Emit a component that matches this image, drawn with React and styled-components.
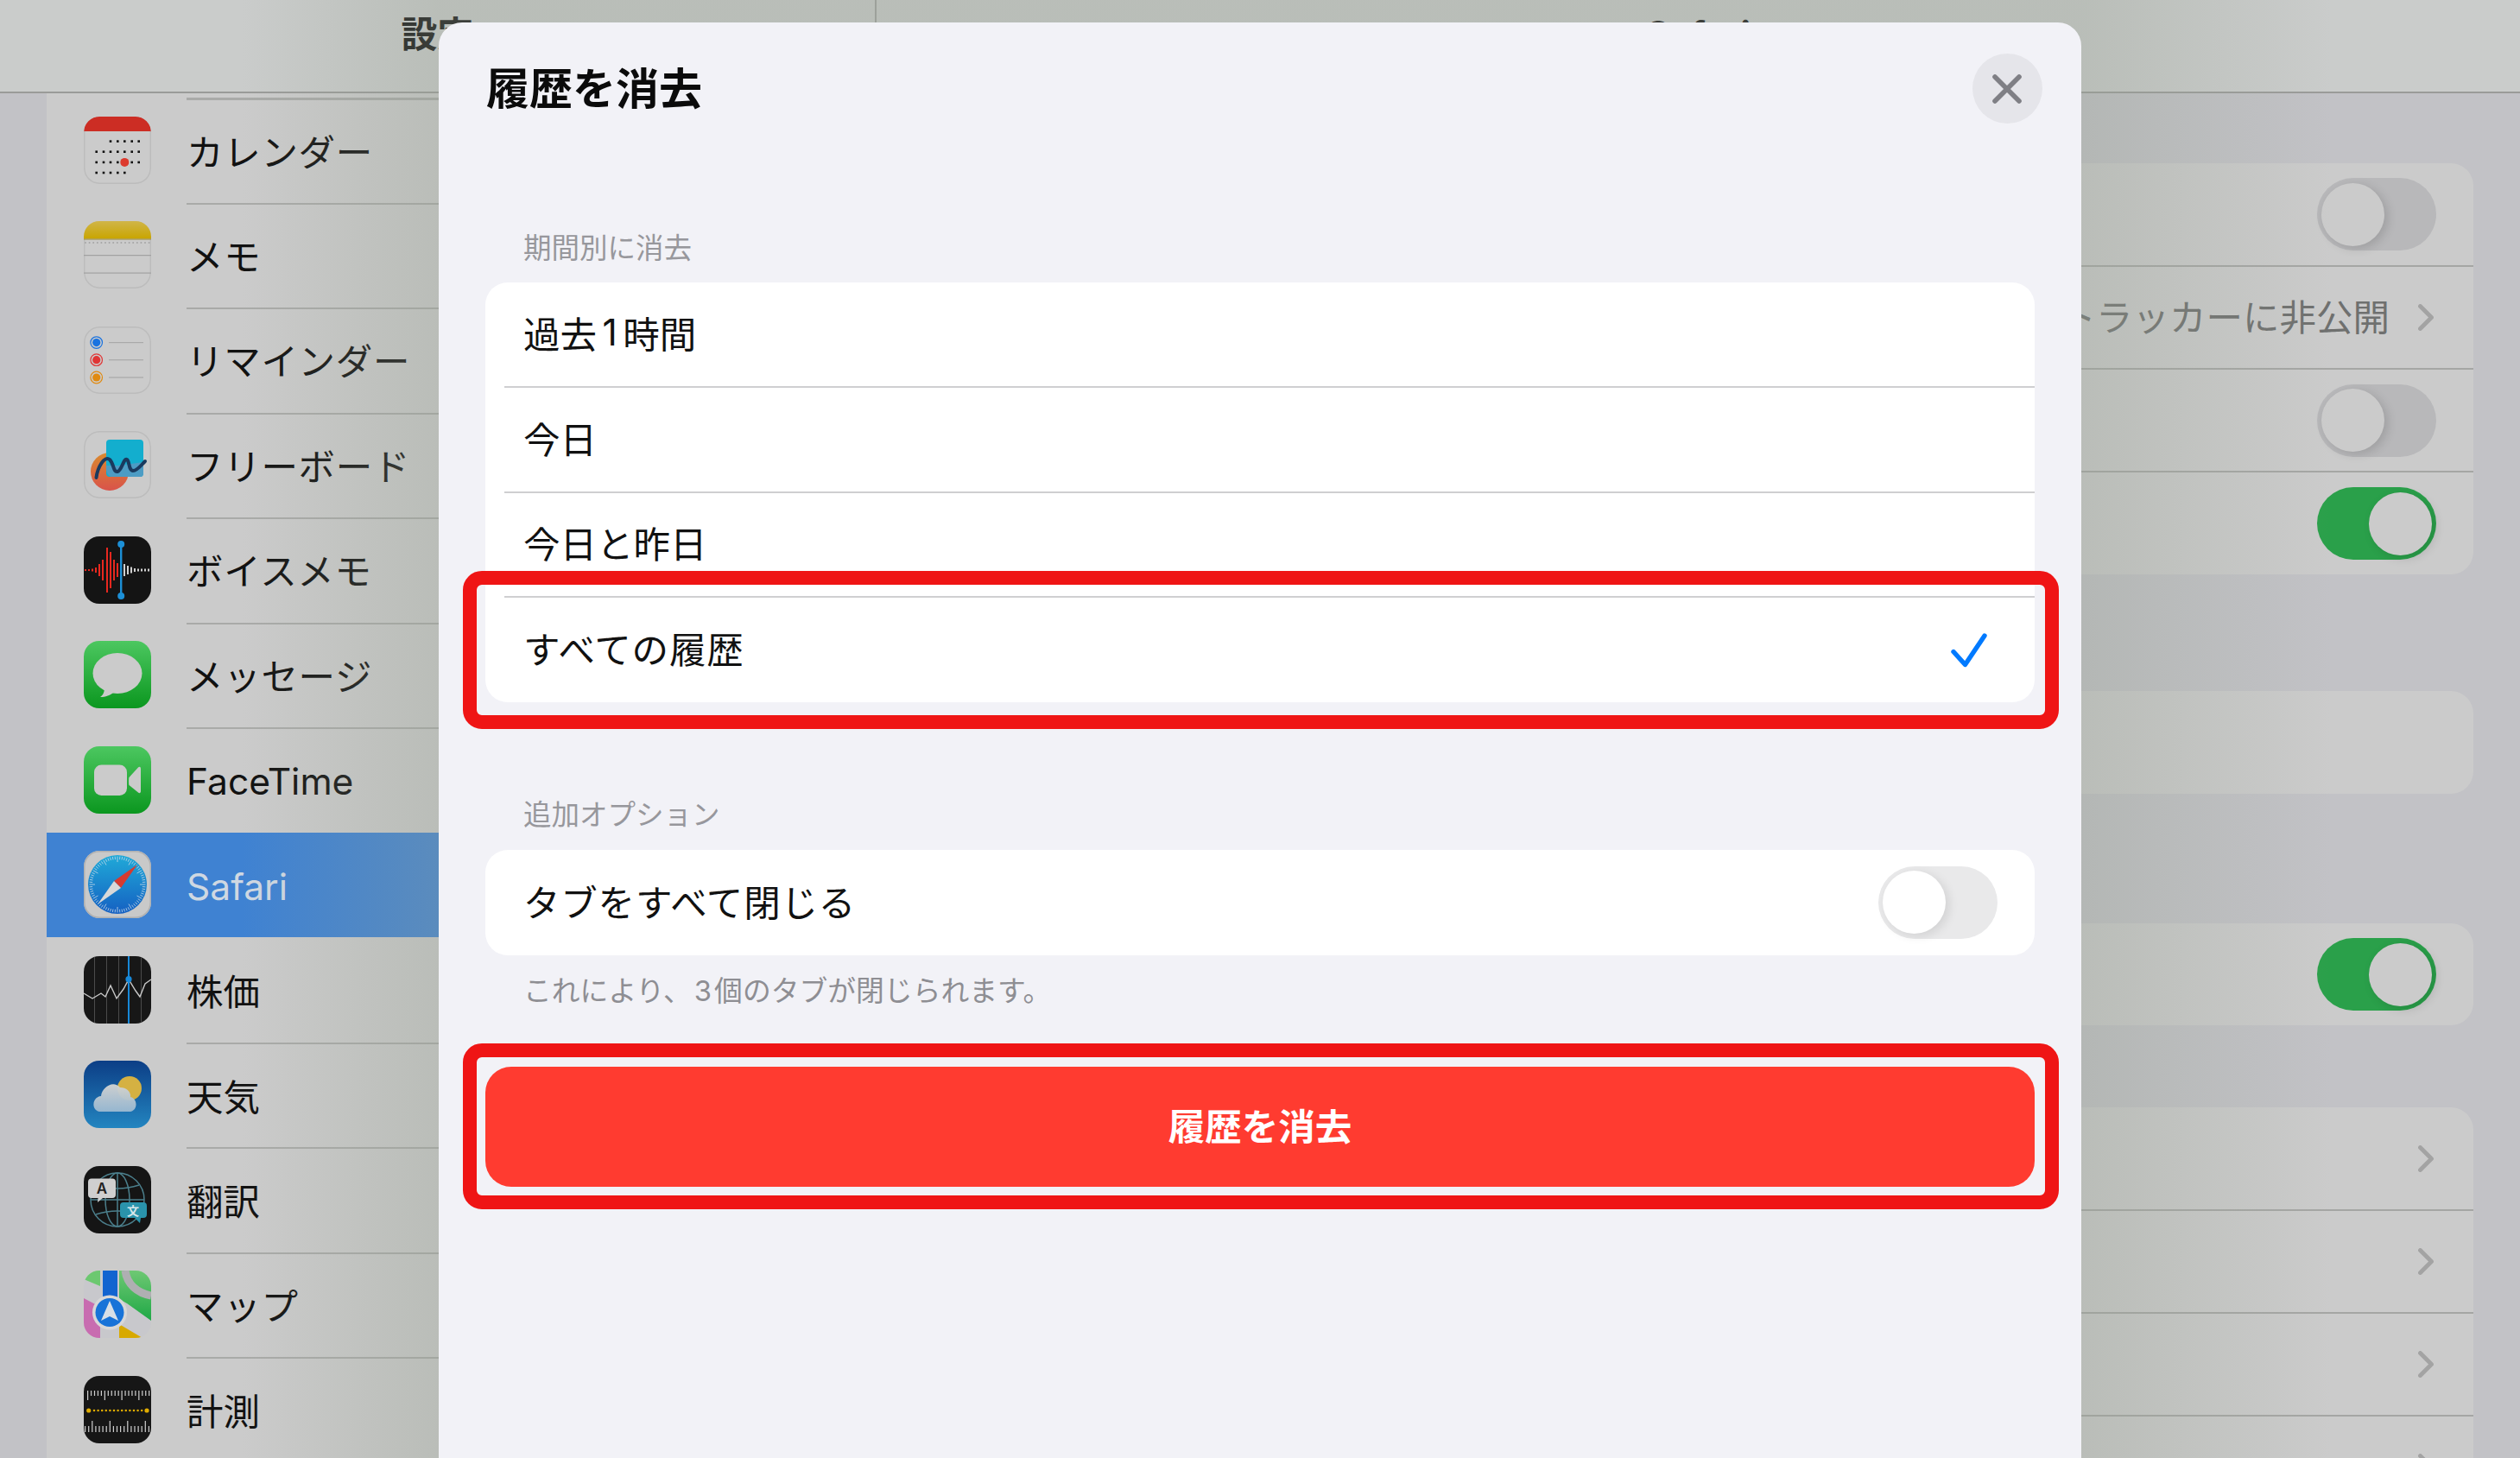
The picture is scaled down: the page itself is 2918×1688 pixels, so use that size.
import React from "react";
import styled, { createGlobalStyle } from "styled-components";

const FONT = `"Inter", "Noto Sans CJK JP", sans-serif`;

const Global = createGlobalStyle`
  html, body { margin: 0; padding: 0; background: #c2c2c6; }
  * { box-sizing: border-box; }
`;

const Page = styled.div`
  position: relative; width: 2918px; height: 1688px; overflow: hidden;
  font-family: ${FONT}; color: #111; background: #c2c2c6;
  display: flex; flex-direction: column;
`;
const TopBar = styled.header`
  flex: 0 0 108px; display: flex; background: #cacccb; border-bottom: 2px solid #9a9b99;
`;
const BarCell = styled.div`
  display: flex; justify-content: center; padding-top: 17px;
  font-size: 42px; line-height: 46px; font-weight: 700; color: #111;
  ${p => p.$left ? "flex: 0 0 1015px; border-right: 2px solid #a0a19f;" : "flex: 1;"}
`;
const Body = styled.div`flex: 1; display: flex; min-height: 0;`;
const Sidebar = styled.nav`flex: 0 0 1015px; padding-left: 54px; overflow: hidden;`;
const SideList = styled.div`background: #cbcbcb; height: 100%; padding-top: 5px;`;
const SideRow = styled.div`
  height: 121.5px; display: flex; align-items: center; padding-left: 43px;
  background: ${p => p.$active ? "#3f82d2" : "transparent"};
`;
const SideBody = styled.div`
  flex: 1; align-self: stretch; margin-left: 41px; display: flex; align-items: center;
  font-size: 42.5px;
  letter-spacing: ${p => p.$kind ? 0 : 0.7}px;
  padding: ${p => p.$kind === "latin" ? "2px 0 0" : p.$kind === "kanji" ? "0 0 2px" : "0 0 4px"};
  color: ${p => p.$active ? "#cfd8e2" : "#111"};
  border-top: ${p => p.$first ? 3 : 2}px solid ${p => p.$noLine ? "transparent" : "#a9aaa8"};
`;
const IconSvg = styled.svg`
  width: 78px; height: 78px; flex: 0 0 78px; border-radius: 18px; display: block;
`;

const Pane = styled.main`flex: 1; padding: 81px 54px 0 0; overflow: hidden; display: flex; flex-direction: column;`;
const PaneGroup = styled.section`
  flex: none; margin-top: ${p => p.$top || 0}px; background: #cbcbcb; border-radius: 26px;
`;
const PaneRow = styled.div`
  height: ${p => p.$h || 119}px; display: flex; align-items: center; justify-content: flex-end;
  padding-right: ${p => p.$chev ? 46 : 43}px; gap: 33px;
  white-space: nowrap;
  border-top: ${p => p.$first ? "none" : "2px solid #a5a6a4"};
`;
const PaneLabel = styled.span`font-size: 42.5px; color: #6f706f; padding-bottom: 6px;`;
const Chevron = styled.svg`width: 18px; height: 31px; flex: none; display: block;`;

const ToggleTrack = styled.div`
  position: relative; width: 138px; height: 84px; flex: none; border-radius: 42px;
  background: ${p => p.$on ? "#2aa04a" : p.$light ? "#e9e9ea" : "#b8b8ba"};
`;
const ToggleKnob = styled.div`
  position: absolute; top: 5.5px; left: ${p => p.$on ? 60 : 5}px; width: 73px; height: 73px; border-radius: 50%;
  background: ${p => p.$light ? "#fff" : "#cbcbcb"};
  box-shadow: 4px 3px 12px rgba(0,0,0,${p => p.$light ? 0.1 : 0.14});
`;

const Dim = styled.div`
  position: absolute; inset: 0; pointer-events: none;
  background: linear-gradient(90deg,
    rgba(150,160,145,0) 9.6%, rgba(150,160,145,.32) 17.4%,
    rgba(150,160,145,.32) 82.6%, rgba(150,160,145,0) 92.5%);
`;

const Sheet = styled.div`
  position: absolute; left: 508px; top: 26px; width: 1902px; height: 1700px;
  background: #f2f2f7; border-radius: 27px; padding: 36px 54px 0;
`;
const SheetHead = styled.div`display: flex; align-items: center; justify-content: space-between; height: 81px; margin-right: -8.5px;`;
const SheetTitle = styled.h1`margin: 0 0 0 1px; font-size: 50px; line-height: 1; font-weight: 700; color: #0b0b0b;`;
const CloseBtn = styled.button`
  width: 81px; height: 81px; border: 0; padding: 0; border-radius: 50%; background: #e5e5ea;
  display: flex; align-items: center; justify-content: center;
`;
const SectionLabel = styled.div`
  font-size: 32.5px; line-height: 40px; color: #97979c; padding-left: 44px;
  margin-top: ${p => p.$top}px; margin-bottom: ${p => p.$bottom}px;
`;
const WhiteGroup = styled.div`background: #fff; border-radius: 26px;`;
const ChoiceRow = styled.div`position: relative; display: flow-root; height: 121.5px; padding-left: 22px;`;
const ChoiceInner = styled.div`
  display: flex; align-items: center; padding: 0 55px 7px 22px;
  font-size: 42.5px; color: #111;
  letter-spacing: ${p => p.$wide ? 0.9 : 0}px;
  ${p => p.$first
    ? "height: 100%;"
    : "height: calc(100% + 1.5px); margin-top: -1.5px; border-top: 2px solid #cfcfd1;"}
`;
const SpacedDigit = styled.span`margin: 0 ${p => p.$m}px;`;
const Check = styled.svg`margin: 9px 0 0 auto; width: 42px; height: 42px; flex: none; display: block;`;
const SwitchRow = styled.div`
  height: 121.5px; display: flex; align-items: center; justify-content: space-between;
  padding: 0 43px 0 44px;
`;
const SwitchLabel = styled.span`font-size: 42.5px; letter-spacing: 0.8px; color: #111; padding-bottom: 5px;`;
const Note = styled.div`
  margin-top: 21px; padding-left: 44px; font-size: 32.8px; line-height: 40px; color: #8e8e93;
`;
const DangerWrap = styled.div`position: relative; margin-top: 68px;`;
const DangerBtn = styled.button`
  width: 100%; height: 139px; border: 0; border-radius: 30px; background: #ff3b30; color: #fff;
  font-family: inherit; font-size: 42.5px; font-weight: 700; padding: 0 0 6px;
  display: flex; align-items: center; justify-content: center;
`;
const Frame = styled.div`
  position: absolute; top: ${p => p.$t}px; bottom: ${p => p.$b}px; left: -26px; right: -28px;
  border: 16px solid #ef1515; border-radius: 22px; pointer-events: none;
`;

const Dots = ({ n, y, x0, step, r, fill }) => Array.from({ length: n }, (_, i) => <circle key={i} cx={x0 + i * step} cy={y} r={r} fill={fill} />);

const IconCalendar = () => {
  const xs = [14.7, 23, 31, 39.3, 47.3, 55.7, 63.7];
  const rows = [[28.6, 2, 7], [40.7, 0, 7], [52.9, 0, 7], [65, 0, 5]];
  return (
    <IconSvg viewBox="0 0 78 78">
      <rect width="78" height="78" fill="#cbcbcb" />
      <rect x=".75" y=".75" width="76.5" height="76.5" rx="17.5" fill="none" stroke="#bcbcbc" strokeWidth="1.5" />
      <path d="M0 17V18A18 18 0 0 1 18 0H60A18 18 0 0 1 78 18V17Z" fill="#cc2d24" />
      {rows.map(([y, a, b]) => xs.slice(a, b).map(x => <rect key={x + "-" + y} x={x - 1.3} y={y - 1.3} width="2.6" height="2.6" fill="#111" />))}
      <circle cx="47.3" cy="52.9" r="5" fill="#dc3a2e" />
    </IconSvg>
  );
};
const IconNotes = () => (
  <IconSvg viewBox="0 0 78 78">
    <defs><linearGradient id="nt" x1="0" y1="0" x2="0" y2="1"><stop offset="0" stopColor="#d0b548" /><stop offset="1" stopColor="#c9a500" /></linearGradient></defs>
    <rect width="78" height="78" fill="#cbcbcb" />
    <rect x=".75" y=".75" width="76.5" height="76.5" rx="17.5" fill="none" stroke="#bcbcbc" strokeWidth="1.5" />
    <rect width="78" height="20.5" fill="url(#nt)" />
    <rect y="20.5" width="78" height="1" fill="#9b8a3a" />
    <Dots n={17} y={25} x0={2} step={4.6} r={1} fill="#a5a5a5" />
    <rect y="39" width="78" height="1.2" fill="#a1a1a1" />
    <rect y="59.5" width="78" height="1.2" fill="#a1a1a1" />
  </IconSvg>
);
const IconReminders = () => (
  <IconSvg viewBox="0 0 78 78">
    <rect width="78" height="78" fill="#cbcbcb" />
    <rect x=".75" y=".75" width="76.5" height="76.5" rx="17.5" fill="none" stroke="#bcbcbc" strokeWidth="1.5" />
    {[[18.6, "#1a73e0"], [38.7, "#e03535"], [59, "#e08a10"]].map(([y, c]) => (
      <g key={y}>
        <circle cx="14.7" cy={y} r="6.8" fill="none" stroke={c} strokeWidth="1.2" />
        <circle cx="14.7" cy={y} r="4.6" fill={c} />
        <rect x="29" y={y - .6} width="40" height="1.2" fill="#a9a9a9" />
      </g>
    ))}
  </IconSvg>
);
const IconFreeform = () => (
  <IconSvg viewBox="0 0 78 78">
    <defs><linearGradient id="ff" x1="0" y1="0" x2="0" y2="1"><stop offset="0" stopColor="#da8a2e" /><stop offset="1" stopColor="#d9534a" /></linearGradient></defs>
    <rect width="78" height="78" fill="#cbcbcb" />
    <rect x=".75" y=".75" width="76.5" height="76.5" rx="17.5" fill="none" stroke="#bcbcbc" strokeWidth="1.5" />
    <circle cx="30" cy="47" r="22" fill="url(#ff)" />
    <rect x="26" y="10" width="43" height="43" rx="4" fill="#13aece" />
    <path d="M26 40C25 46 28 52 32 53H66C68 53 69 51 69 49V36L40 40Z" fill="#4d9cc4" />
    <path d="M14.5 54C16 42 24 28 30 33C35 38 34 48 39 47C44 46 46 31 50 33C53 35 52 46 57 46C62 46 66 40 71 35" fill="none" stroke="#1a3a5e" strokeWidth="4" strokeLinecap="round" />
  </IconSvg>
);
const IconVoice = () => {
  const red = [[2, 2], [6, 2], [10, 3], [14, 6], [18, 14], [22, 24], [27, 52], [31, 42], [35, 24], [39, 16]];
  const white = [[47, 14], [51, 10], [55, 7], [59, 4], [63, 3], [67, 3], [71, 3], [75, 3]];
  return (
    <IconSvg viewBox="0 0 78 78">
      <rect width="78" height="78" fill="#141414" />
      {red.map(([x, h]) => <rect key={x} x={x - 1} y={39 - h / 2} width="2" height={h} fill="#e8281f" />)}
      {white.map(([x, h]) => <rect key={x} x={x - 1} y={39 - h / 2} width="2" height={h} fill="#cfcfcf" />)}
      <rect x="42" y="9" width="2.4" height="60" fill="#1c8fd6" />
      <circle cx="43.2" cy="9" r="4" fill="#1c8fd6" /><circle cx="43.2" cy="69" r="4" fill="#1c8fd6" />
    </IconSvg>
  );
};
const IconMessages = () => (
  <IconSvg viewBox="0 0 78 78">
    <defs><linearGradient id="gm" x1="0" y1="0" x2="0" y2="1"><stop offset="0" stopColor="#4cc760" /><stop offset="1" stopColor="#0b971f" /></linearGradient></defs>
    <rect width="78" height="78" fill="url(#gm)" />
    <ellipse cx="39" cy="37.5" rx="28.5" ry="23.5" fill="#cbcbcb" />
    <path d="M24 54C24 60 22 63 19 65C25 65 31 63 35 59Z" fill="#cbcbcb" />
  </IconSvg>
);
const IconFaceTime = () => (
  <IconSvg viewBox="0 0 78 78">
    <defs><linearGradient id="gf" x1="0" y1="0" x2="0" y2="1"><stop offset="0" stopColor="#4cc760" /><stop offset="1" stopColor="#0b971f" /></linearGradient></defs>
    <rect width="78" height="78" fill="url(#gf)" />
    <rect x="12" y="21.5" width="38" height="35.5" rx="8.5" fill="#cbcbcb" />
    <path d="M52.5 36L63 24.5C64.5 23.2 66 24 66 26V52C66 54 64.5 54.8 63 53.5L52.5 45C52 44.5 52 36.5 52.5 36Z" fill="#cbcbcb" />
  </IconSvg>
);
const IconSafari = () => (
  <IconSvg viewBox="0 0 78 78">
    <defs><linearGradient id="gs" x1="0" y1="0" x2="0" y2="1"><stop offset="0" stopColor="#20aad8" /><stop offset="1" stopColor="#1560c2" /></linearGradient></defs>
    <rect width="78" height="78" fill="#c9c9c9" />
    <rect x=".75" y=".75" width="76.5" height="76.5" rx="17.5" fill="none" stroke="#b0b0b0" strokeWidth="1.5" />
    <circle cx="39" cy="39" r="34" fill="url(#gs)" />
    {Array.from({ length: 72 }, (_, i) => {
      const a = (i * 5 * Math.PI) / 180; const inner = i % 6 === 0 ? 26 : 29;
      return <line key={i} x1={39 + Math.cos(a) * inner} y1={39 + Math.sin(a) * inner} x2={39 + Math.cos(a) * 32.5} y2={39 + Math.sin(a) * 32.5} stroke="#c9d9e8" strokeWidth=".8" />;
    })}
    <polygon points="62,16 35,35 43,43" fill="#d63a30" />
    <polygon points="16,62 35,35 43,43" fill="#d8d8d8" />
  </IconSvg>
);
const IconStocks = () => (
  <IconSvg viewBox="0 0 78 78">
    <rect width="78" height="78" fill="#171717" />
    {[12, 26, 40, 66].map(x => <rect key={x} x={x} y="0" width="1" height="78" fill="#4b4b4b" />)}
    <polyline points="0,43 10,49 20,43 25,47 31,34 38,49 46,38 52,27 60,40 65,47 71,32 78,27" fill="none" stroke="#c8c8c8" strokeWidth="1.4" />
    <rect x="51" y="0" width="2" height="78" fill="#1788d8" />
    <circle cx="52" cy="26.7" r="3.6" fill="#1788d8" />
  </IconSvg>
);
const IconWeather = () => (
  <IconSvg viewBox="0 0 78 78">
    <defs>
      <linearGradient id="gw" x1="0" y1="0" x2="0" y2="1"><stop offset="0" stopColor="#0c3e86" /><stop offset="1" stopColor="#2385c0" /></linearGradient>
      <linearGradient id="gc" x1="0" y1="0" x2="0" y2="1"><stop offset="0" stopColor="#d4d4d2" /><stop offset="1" stopColor="#9bb9d1" /></linearGradient>
    </defs>
    <rect width="78" height="78" fill="url(#gw)" />
    <circle cx="53" cy="32" r="14" fill="#d5b142" />
    <path d="M20 59C8 59 9 42 20 41C21 31 34 22 42 31C50 31 55 37 54 42C63 44 63 59 52 59Z" fill="url(#gc)" opacity=".96" />
  </IconSvg>
);
const IconTranslate = () => (
  <IconSvg viewBox="0 0 78 78">
    <rect width="78" height="78" fill="#151515" />
    <g fill="none" stroke="#4b7f8c" strokeWidth="1.5">
      <circle cx="39" cy="39" r="31" />
      <ellipse cx="39" cy="39" rx="14" ry="31" />
      <line x1="39" y1="8" x2="39" y2="70" />
      <path d="M14 22Q39 30 64 22M8 39H70M14 56Q39 48 64 56" />
    </g>
    <path d="M9 14.5H33Q37 14.5 37 18.5V33Q37 37 33 37H22L16 42L16.5 37H9Q5 37 5 33V18.5Q5 14.5 9 14.5Z" fill="#cfcfcf" />
    <text x="21" y="32" fontSize="17" fontWeight="600" textAnchor="middle" fill="#222" fontFamily="Inter, sans-serif">A</text>
    <path d="M46 42H69Q73 42 73 46V56Q73 60 69 60H66L65 66L59 60H46Q42 60 42 56V46Q42 42 46 42Z" fill="#2a93ab" />
    <text x="57" y="57" fontSize="14" fontWeight="700" textAnchor="middle" fill="#d5e6ea" fontFamily="'Noto Sans CJK JP', sans-serif">文</text>
  </IconSvg>
);
const IconMaps = () => (
  <IconSvg viewBox="0 0 78 78">
    <defs><linearGradient id="gg" x1="0" y1="0" x2="0" y2="1"><stop offset="0" stopColor="#6ec873" /><stop offset="1" stopColor="#1fa846" /></linearGradient></defs>
    <rect width="78" height="78" fill="#c8c8cc" />
    <polygon points="0,0 19,0 19,18 0,10" fill="#6cc870" />
    <polygon points="41,0 78,0 78,58 50,38 41,33" fill="url(#gg)" />
    <path d="M48 0C50 16 62 26 78 29" fill="none" stroke="#afafb2" strokeWidth="9" />
    <polygon points="0,32 19,42 19,78 0,78" fill="#c86cb0" />
    <polygon points="41,62 68,78 41,78" fill="#d8a900" />
    <rect x="22" y="0" width="17" height="32" fill="#1264d0" />
    <circle cx="30" cy="48.5" r="20" fill="#d8d8d8" />
    <circle cx="30" cy="48.5" r="16.5" fill="#1873d8" />
    <polygon points="30,35 40,58 30,53 20,58" fill="#d8dfe6" />
  </IconSvg>
);
const IconMeasure = () => (
  <IconSvg viewBox="0 0 78 78">
    <rect width="78" height="78" fill="#161616" />
    {Array.from({ length: 19 }, (_, i) => <rect key={i} x={4 + i * 3.95} y="17" width="1.2" height={i % 5 === 0 ? 11 : 6} fill="#cfcfcf" />)}
    {Array.from({ length: 19 }, (_, i) => <rect key={i} x={1 + i * 4.1} y={i % 5 === 2 ? 52 : 58} width="1.2" height={i % 5 === 2 ? 13 : 7} fill="#cfcfcf" />)}
    <Dots n={13} y={40} x0={12} step={4.6} r={1.3} fill="#e0ac00" />
    <circle cx="5.7" cy="40" r="2.6" fill="#e0ac00" /><circle cx="73" cy="40" r="2.6" fill="#e0ac00" />
  </IconSvg>
);

const apps = [
  ["カレンダー", IconCalendar], ["メモ", IconNotes], ["リマインダー", IconReminders], ["フリーボード", IconFreeform],
  ["ボイスメモ", IconVoice], ["メッセージ", IconMessages], ["FaceTime", IconFaceTime, "latin"], ["Safari", IconSafari, "latin"],
  ["株価", IconStocks, "kanji"], ["天気", IconWeather, "kanji"], ["翻訳", IconTranslate, "kanji"], ["マップ", IconMaps], ["計測", IconMeasure, "kanji"],
];
const ACTIVE = 7;

const Chev = () => (
  <Chevron viewBox="0 0 18 31"><path d="M2.5 2.5L15.5 15.5L2.5 28.5" fill="none" stroke="#a3a3a3" strokeWidth="4.8" strokeLinecap="round" strokeLinejoin="round" /></Chevron>
);
const Toggle = ({ on, light }) => (
  <ToggleTrack $on={on} $light={light}><ToggleKnob $on={on} $light={light} /></ToggleTrack>
);

export default function App() {
  return (
    <Page>
      <Global />
      <TopBar>
        <BarCell $left>設定</BarCell>
        <BarCell>Safari</BarCell>
      </TopBar>
      <Body>
        <Sidebar>
          <SideList>
            {apps.map(([label, Icon, kind], i) => (
              <SideRow key={label} $active={i === ACTIVE}>
                <Icon />
                <SideBody $first={i === 0} $kind={kind} $active={i === ACTIVE} $noLine={i === ACTIVE || i === ACTIVE + 1}>{label}</SideBody>
              </SideRow>
            ))}
          </SideList>
        </Sidebar>
        <Pane>
          <PaneGroup>
            <PaneRow $first $h={118}><Toggle /></PaneRow>
            <PaneRow $chev><PaneLabel>トラッカーに非公開</PaneLabel><Chev /></PaneRow>
            <PaneRow><Toggle /></PaneRow>
            <PaneRow $h={120}><Toggle on /></PaneRow>
          </PaneGroup>
          <PaneGroup $top={135}><PaneRow $first /></PaneGroup>
          <PaneGroup $top={150}><PaneRow $first $h={118}><Toggle on /></PaneRow></PaneGroup>
          <PaneGroup $top={95}>
            <PaneRow $first $chev $h={118}><Chev /></PaneRow>
            <PaneRow $chev><Chev /></PaneRow>
            <PaneRow $chev><Chev /></PaneRow>
            <PaneRow $chev><Chev /></PaneRow>
          </PaneGroup>
        </Pane>
      </Body>
      <Dim />
      <Sheet>
        <SheetHead>
          <SheetTitle>履歴を消去</SheetTitle>
          <CloseBtn aria-label="閉じる">
            <svg width="34" height="34" viewBox="0 0 34 34"><path d="M3 3L31 31M31 3L3 31" stroke="#7f7f85" strokeWidth="5.6" strokeLinecap="round" /></svg>
          </CloseBtn>
        </SheetHead>
        <SectionLabel $top={125} $bottom={19}>期間別に消去</SectionLabel>
        <WhiteGroup>
          <ChoiceRow><ChoiceInner $first>過去<SpacedDigit $m={6.5}>1</SpacedDigit>時間</ChoiceInner></ChoiceRow>
          <ChoiceRow><ChoiceInner>今日</ChoiceInner></ChoiceRow>
          <ChoiceRow><ChoiceInner>今日と昨日</ChoiceInner></ChoiceRow>
          <ChoiceRow>
            <ChoiceInner $wide>
              すべての履歴
              <Check viewBox="0 0 42 42"><path d="M3 21.5L16.5 36.5L39 3" fill="none" stroke="#007aff" strokeWidth="5.4" strokeLinecap="round" strokeLinejoin="round" /></Check>
            </ChoiceInner>
            <Frame $t={-31} $b={-31} />
          </ChoiceRow>
        </WhiteGroup>
        <SectionLabel $top={111} $bottom={20}>追加オプション</SectionLabel>
        <WhiteGroup>
          <SwitchRow><SwitchLabel>タブをすべて閉じる</SwitchLabel><Toggle light /></SwitchRow>
        </WhiteGroup>
        <Note>これにより、<SpacedDigit $m={3}>3</SpacedDigit>個のタブが閉じられます。</Note>
        <DangerWrap>
          <DangerBtn>履歴を消去</DangerBtn>
          <Frame $t={-27} $b={-26} />
        </DangerWrap>
      </Sheet>
    </Page>
  );
}
